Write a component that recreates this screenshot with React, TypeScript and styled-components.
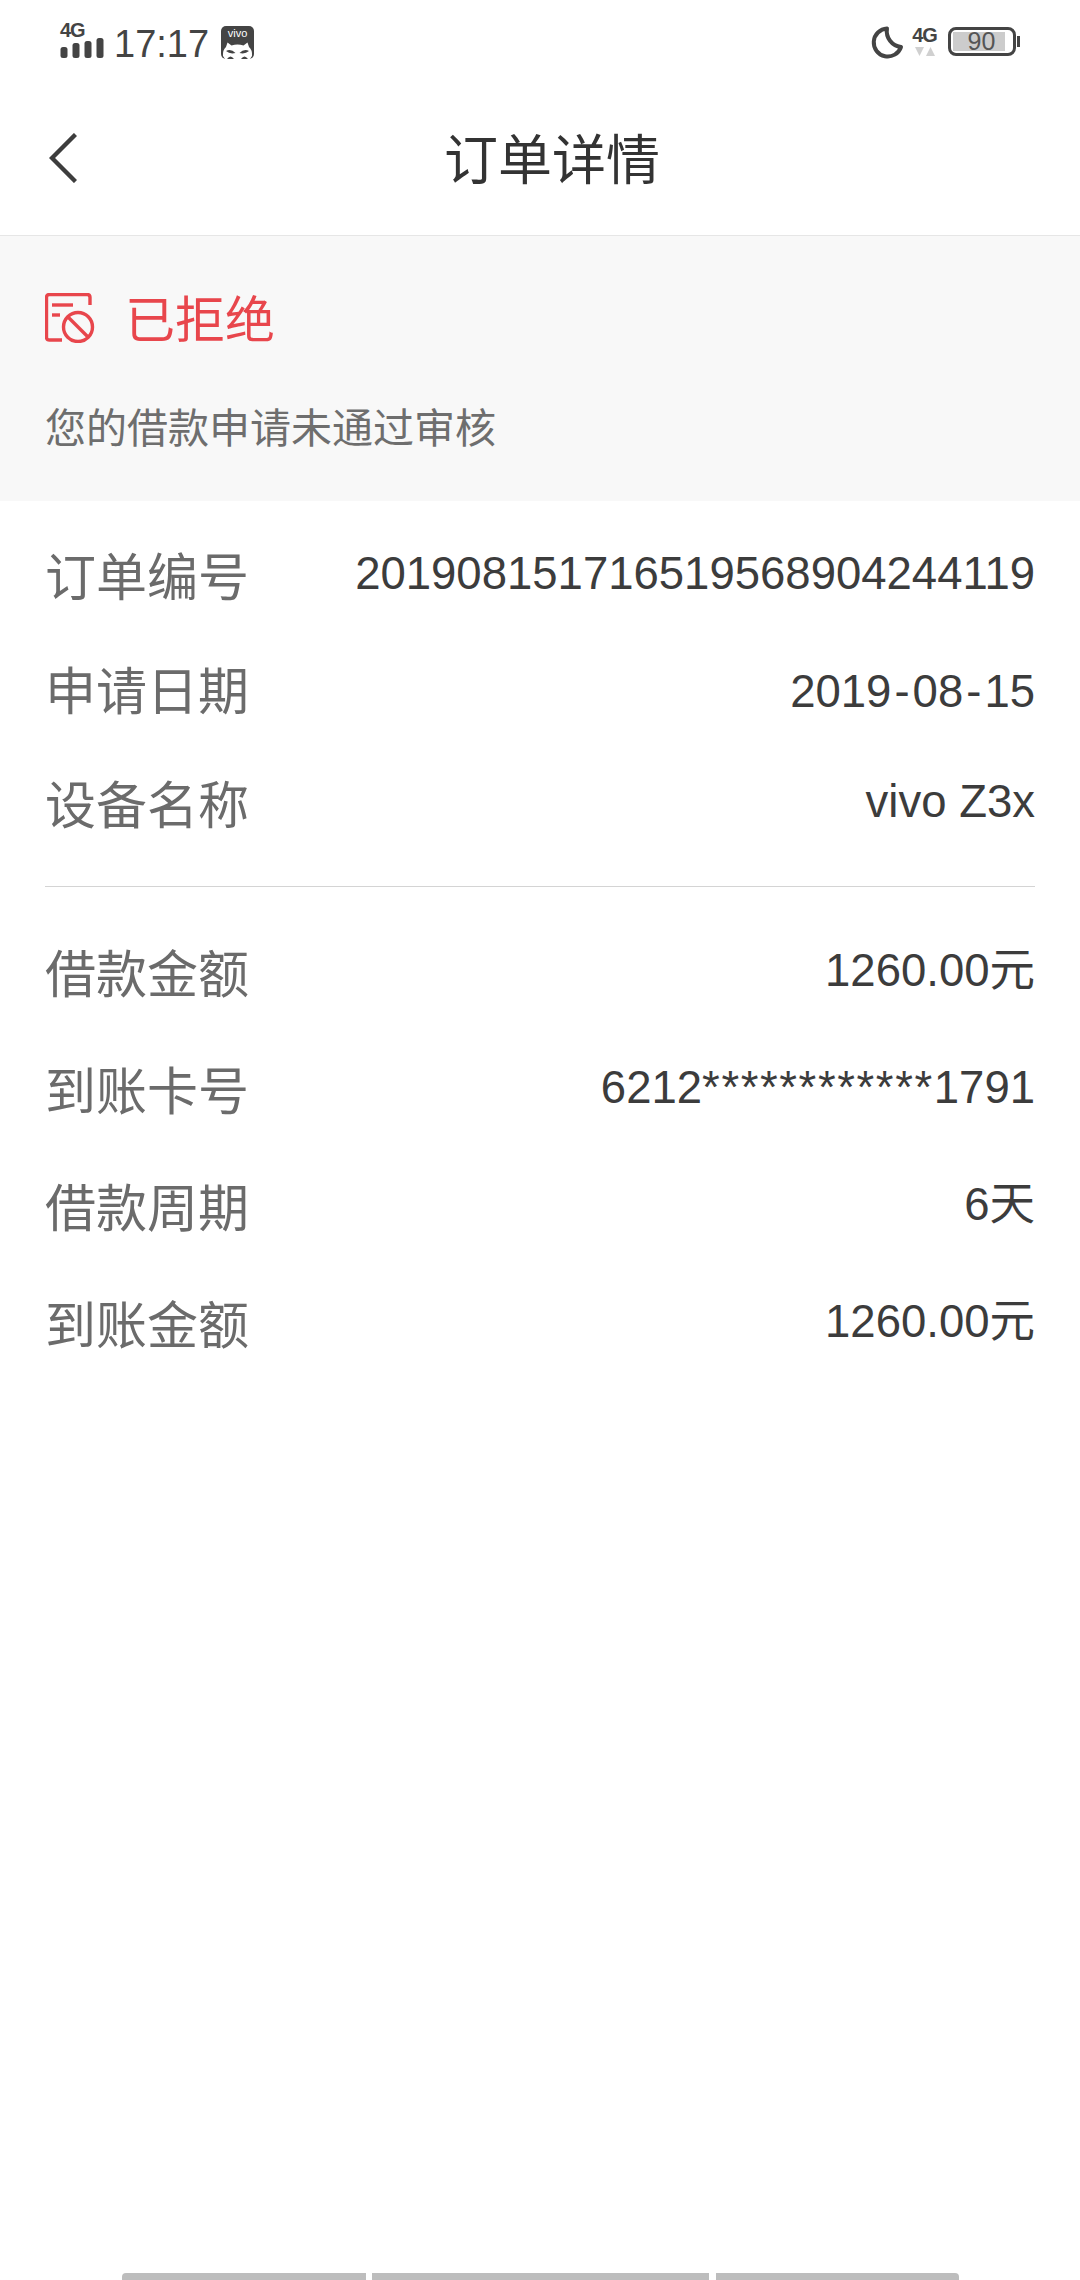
import React from "react";
import styled, { createGlobalStyle } from "styled-components";

const GlobalStyle = createGlobalStyle`
  html, body {
    margin: 0;
    padding: 0;
    background: #fff;
    font-family: "Noto Sans CJK SC", "Open Sans", sans-serif;
  }
`;

const SignalIcon = () => (
  <svg width="44" height="20" viewBox="0 0 44 20" style={{ display: "block" }}>
    <rect x="0.5" y="9" width="7" height="11" rx="2.5" fill="#444" />
    <rect x="12.5" y="5" width="7" height="15" rx="2.5" fill="#444" />
    <rect x="24.5" y="3" width="7" height="17" rx="2.5" fill="#444" />
    <rect x="36.5" y="0" width="7" height="20" rx="2.5" fill="#444" />
  </svg>
);

const VivoIcon = () => (
  <svg width="33" height="33" viewBox="0 0 33 33">
    <rect width="33" height="33" rx="5" fill="#444" />
    <text x="16.5" y="11" textAnchor="middle" fontSize="11" fontFamily="Liberation Sans, sans-serif" fill="#fff">
      vivo
    </text>
    <path d="M2 30 Q1.5 24 5 21 L6.5 16.5 L10.5 19.5 Q16.5 17.5 22.5 19.5 L26.5 16.5 L28 21 Q31.5 24 31 30 L29 33 H4Z" fill="#fff" />
    <path d="M5 25 Q10 22.5 14.5 27 Q9 28.5 5 25Z M18.5 27 Q23 22.5 28 25 Q24 28.5 18.5 27Z" fill="#444" />
    <path d="M6 33 Q9.5 28 13 33Z M20 33 Q23.5 28 27 33Z" fill="#444" />
  </svg>
);

const MoonIcon = () => (
  <svg width="34" height="34" viewBox="0 0 34 34">
    <path d="M17 2.5 A14 14 0 1 0 31 21 A16 16 0 0 1 17 2.5Z" fill="none" stroke="#444" strokeWidth="4" strokeLinejoin="round" />
  </svg>
);

const ArrowsIcon = () => (
  <svg width="20" height="9" viewBox="0 0 20 9" style={{ display: "block" }}>
    <path d="M0 0 H9 L4.5 9Z" fill="#d0d0d0" />
    <path d="M11 9 H20 L15.5 0Z" fill="#d0d0d0" />
  </svg>
);

const BackIcon = () => (
  <svg width="28" height="50" viewBox="0 0 28 50" style={{ display: "block" }}>
    <path d="M26.5 1.5 L3 25 L26.5 48.5" fill="none" stroke="#3d3d3d" strokeWidth="4.4" />
  </svg>
);

const RejectIcon = () => (
  <svg width="50" height="50" viewBox="0 0 50 50">
    <g fill="none" stroke="#e8464c" strokeWidth="3.4">
      <path d="M17 47 H4.5 Q1.5 47 1.5 44 V4.5 Q1.5 1.5 4.5 1.5 H42 Q45 1.5 45 4.5 V12" />
      <path d="M7 12 H28" />
      <path d="M7 22 H15" />
      <circle cx="33" cy="34" r="14.5" />
      <path d="M23 24 L43 44" />
    </g>
  </svg>
);

export default function App() {
  const rows = [
    { label: "订单编号", value: "201908151716519568904244119" },
    {
      label: "申请日期",
      value: (
        <>
          2019<Dash>-</Dash>08<Dash>-</Dash>15
        </>
      ),
      nudge: true,
    },
    { label: "设备名称", value: "vivo Z3x" },
  ];

  const rows2 = [
    { label: "借款金额", value: "1260.00元" },
    {
      label: "到账卡号",
      value: (
        <>
          6212<Stars>************</Stars>1791
        </>
      ),
    },
    { label: "借款周期", value: "6天" },
    { label: "到账金额", value: "1260.00元" },
  ];

  return (
    <Page>
      <GlobalStyle />
      <StatusBar>
        <StatusGroup>
          <IconStack>
            <SmallTag>4G</SmallTag>
            <SignalIcon />
          </IconStack>
          <Clock>17:17</Clock>
          <VivoIcon />
        </StatusGroup>
        <StatusGroup>
          <MoonIcon />
          <DataStack>
            <SmallTag>4G</SmallTag>
            <ArrowsIcon />
          </DataStack>
          <Battery>
            <BatteryFill>90</BatteryFill>
          </Battery>
          <BatteryCap />
        </StatusGroup>
      </StatusBar>
      <Header>
        <BackButton>
          <BackIcon />
        </BackButton>
        <Title>订单详情</Title>
      </Header>
      <Banner>
        <BannerTitle>
          <BannerIcon>
            <RejectIcon />
          </BannerIcon>
          <StatusText>已拒绝</StatusText>
        </BannerTitle>
        <BannerNote>您的借款申请未通过审核</BannerNote>
      </Banner>
      <Section $top={16} $rowHeight={114}>
        {rows.map((r) => (
          <Row key={r.label}>
            <Label>{r.label}</Label>
            <Value $nudge={r.nudge}>{r.value}</Value>
          </Row>
        ))}
      </Section>
      <Divider />
      <Section $top={25} $rowHeight={117}>
        {rows2.map((r) => (
          <Row key={r.label}>
            <Label>{r.label}</Label>
            <Value>{r.value}</Value>
          </Row>
        ))}
      </Section>
      <Spacer />
      <HomeBars>
        <HomeBar $width={244} $side="left" />
        <HomeBar $width={337} />
        <HomeBar $width={243} $side="right" />
      </HomeBars>
    </Page>
  );
}

const Page = styled.div`
  width: 1080px;
  height: 2280px;
  display: flex;
  flex-direction: column;
  background: #fff;
  overflow: hidden;
`;

const StatusBar = styled.div`
  height: 85px;
  flex: none;
  box-sizing: border-box;
  padding: 0 60px;
  display: flex;
  justify-content: space-between;
  align-items: center;
`;

const StatusGroup = styled.div`
  display: flex;
  align-items: center;
`;

const IconStack = styled.div`
  width: 44px;
  display: flex;
  flex-direction: column;
  margin: 0 10px 5px 0;
`;

const DataStack = styled.div`
  width: 25px;
  display: flex;
  flex-direction: column;
  align-items: center;
  gap: 4px;
  margin: 0 11px 2px 8px;
`;

const SmallTag = styled.span`
  font-family: "Liberation Sans", sans-serif;
  font-size: 20px;
  font-weight: 700;
  line-height: 16px;
  letter-spacing: -1px;
  color: #444;
`;

const Clock = styled.div`
  font-family: "Liberation Sans", sans-serif;
  font-size: 38px;
  line-height: 44px;
  color: #444;
  margin: 2px 12px 0 0;
`;

const Battery = styled.div`
  width: 68px;
  height: 29px;
  box-sizing: border-box;
  border: 3px solid #444;
  border-radius: 8px;
  padding: 2px;
  margin-bottom: 2px;
  display: flex;
`;

const BatteryFill = styled.div`
  width: 52px;
  box-sizing: border-box;
  padding-left: 5px;
  background: #ccc;
  font-family: "Liberation Sans", sans-serif;
  font-size: 25px;
  line-height: 19px;
  text-align: center;
  color: #555;
`;

const BatteryCap = styled.div`
  width: 3px;
  height: 11px;
  margin: 0 0 2px 1px;
  background: #444;
`;

const Header = styled.div`
  height: 150px;
  flex: none;
  display: flex;
  align-items: center;
  padding-left: 49px;
  border-bottom: 1px solid #e6e6e6;
`;

const BackButton = styled.div`
  width: 28px;
  margin-bottom: 5px;
`;

const Title = styled.div`
  margin: 0 0 6px 367px;
  font-size: 54px;
  line-height: 60px;
  color: #333;
`;

const Banner = styled.div`
  height: 265px;
  flex: none;
  box-sizing: border-box;
  background: #f8f8f8;
  padding: 56px 45px 0;
`;

const BannerTitle = styled.div`
  display: flex;
  align-items: center;
  gap: 30px;
  height: 56px;
`;

const BannerIcon = styled.div`
  width: 50px;
  height: 50px;
  margin-bottom: 5px;
`;

const StatusText = styled.div`
  margin-bottom: 8px;
  font-size: 50px;
  line-height: 56px;
  color: #e8464c;
`;

const BannerNote = styled.div`
  margin-top: 52px;
  font-size: 41px;
  line-height: 50px;
  color: #6e6e6e;
`;

const Section = styled.div<{ $top: number; $rowHeight: number }>`
  padding: ${(p) => p.$top}px 45px 0;
  display: grid;
  grid-auto-rows: ${(p) => p.$rowHeight}px;
  flex: none;
`;

const Row = styled.div`
  display: flex;
  align-items: center;
  justify-content: space-between;
`;

const Label = styled.div`
  font-size: 51px;
  line-height: 60px;
  color: #6b6b6b;
`;

const Value = styled.div<{ $nudge?: boolean }>`
  font-family: "Liberation Sans", "Noto Sans CJK SC", sans-serif;
  font-size: 45.5px;
  line-height: 60px;
  color: #3c3c3c;
  ${(p) => p.$nudge && "margin-top: 7px;"}
`;

const Dash = styled.span`
  margin: 0 3px;
`;

const Stars = styled.span`
  letter-spacing: 1.6px;
`;

const Divider = styled.div`
  height: 1px;
  flex: none;
  margin: 27px 45px 0;
  background: #d4d4d4;
`;

const Spacer = styled.div`
  flex: 1;
`;

const HomeBars = styled.div`
  height: 7px;
  flex: none;
  display: flex;
  justify-content: center;
  gap: 6.5px;
`;

const HomeBar = styled.div<{ $width: number; $side?: "left" | "right" }>`
  width: ${(p) => p.$width}px;
  background: #bdbdbd;
  border-radius: ${(p) =>
    p.$side === "left" ? "4px 0 0 0" : p.$side === "right" ? "0 4px 0 0" : "0"};
`;
